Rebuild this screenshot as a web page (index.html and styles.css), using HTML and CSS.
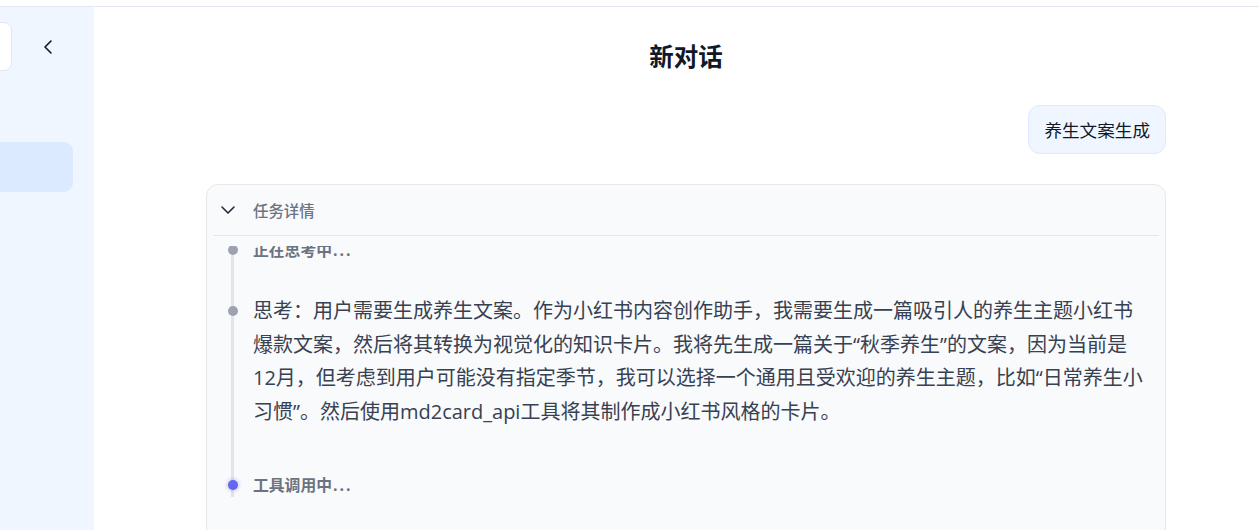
FILE: index.html
```html
<!DOCTYPE html>
<html lang="zh-CN">
<head>
<meta charset="utf-8">
<title>新对话</title>
<link rel="stylesheet" href="styles.css">
</head>
<body>
<div class="topbar"></div>
<div class="layout">
  <aside class="sidebar">
    <div class="side-top">
      <div class="side-box"></div>
      <button class="collapse" aria-label="收起">
        <svg width="16" height="16" viewBox="0 0 16 16"><polyline points="11,2 5,8 11,14" fill="none" stroke="#111827" stroke-width="1.6" stroke-linecap="round" stroke-linejoin="round"/></svg>
      </button>
    </div>
    <div class="side-item active"></div>
  </aside>
  <main class="main">
    <div class="column">
      <h1 class="title">新对话</h1>
      <div class="user-row">
        <div class="bubble">养生文案生成</div>
      </div>
      <section class="task-card">
        <div class="task-head">
          <svg width="16" height="16" viewBox="0 0 16 16"><polyline points="2,5 8,11 14,5" fill="none" stroke="#1f2937" stroke-width="1.6" stroke-linecap="round" stroke-linejoin="round"/></svg>
          <span class="task-label">任务详情</span>
        </div>
        <div class="task-body">
          <div class="timeline">
            <div class="step status">正在思考中<span class="dots">...</span></div>
            <div class="step thought">思考：用户需要生成养生文案。作为小红书内容创作助手，我需要生成一篇吸引人的养生主题小红书爆款文案，然后将其转换为视觉化的知识卡片。我将先生成一篇关于“秋季养生”的文案，因为当前是12月，但考虑到用户可能没有指定季节，我可以选择一个通用且受欢迎的养生主题，比如“日常养生小习惯”。然后使用md2card_api工具将其制作成小红书风格的卡片。</div>
            <div class="step status current">工具调用中<span class="dots">...</span></div>
          </div>
        </div>
      </section>
    </div>
  </main>
</div>
</body>
</html>
```
FILE: styles.css
```css
* { box-sizing: border-box; }
html, body {
  margin: 0;
  height: 530px;
  overflow: hidden;
  background: #ffffff;
  font-family: "Open Sans", "Noto Sans CJK SC", sans-serif;
  color: #111827;
}
.topbar {
  height: 7px;
  border-bottom: 1px solid #e2e8f0;
}
.layout {
  display: flex;
  height: 523px;
}
.sidebar {
  width: 94px;
  flex: none;
  background: #eff6ff;
  overflow: hidden;
}
.side-top {
  display: flex;
  align-items: center;
  padding-top: 15px;
  gap: 28px;
}
.side-box {
  width: 52px;
  height: 49px;
  margin-left: -40px;
  background: #ffffff;
  border: 1px solid #e2e8f0;
  border-radius: 8px;
  flex: none;
}
.collapse {
  border: 0;
  background: none;
  padding: 0;
  width: 16px;
  height: 16px;
  display: flex;
}
.side-item {
  margin-top: 71px;
  margin-left: -20px;
  width: 93px;
  height: 50px;
  border-radius: 9px;
}
.side-item.active { background: #dbeafe; }

.main {
  flex: 1;
  overflow: hidden;
  padding-left: 112px;
}
.column {
  width: 960px;
}
.title {
  margin: 0;
  padding-top: 32px;
  text-align: center;
  font-size: 24.5px;
  line-height: 36px;
  font-weight: 700;
  color: #111827;
}
.user-row {
  display: flex;
  justify-content: flex-end;
  margin-top: 30px;
}
.bubble {
  height: 49px;
  padding: 0 15px;
  display: flex;
  align-items: center;
  background: #eff6ff;
  border: 1px solid #dbeafe;
  border-radius: 12px;
  font-size: 17.6px;
  color: #111827;
}
.task-card {
  margin-top: 30px;
  height: 400px;
  background: #f9fafb;
  border: 1px solid #e5e7eb;
  border-radius: 12px;
}
.task-head {
  margin: 0 6px;
  height: 51px;
  border-bottom: 1px solid #e5e7eb;
  display: flex;
  align-items: center;
  padding-left: 7px;
  gap: 17px;
}
.task-head svg { flex: none; }
.task-label {
  font-size: 15.4px;
  color: #6b7280;
  font-weight: 500;
}
.task-body {
  margin-top: 10px;
  height: 300px;
  overflow: hidden;
}
.timeline {
  position: relative;
  margin-top: -8px;
  margin-left: 20px;
  padding-left: 26px;
  width: 928px;
}
.timeline::before {
  content: "";
  position: absolute;
  left: 3.5px;
  top: 0;
  bottom: 0;
  width: 3px;
  background: #e2e4e9;
}
.step {
  position: relative;
}
.step::before {
  content: "";
  position: absolute;
  left: -25.5px;
  top: 7px;
  width: 10px;
  height: 10px;
  border-radius: 50%;
  background: #9ca3af;
}
.status {
  font-size: 15.8px;
  line-height: 24px;
  font-weight: 700;
  color: #6b7280;
}
.dots {
  letter-spacing: 2px;
  margin-left: 1px;
}
.step.status:first-child { margin-bottom: 32px; }
.thought {
  width: 891px;
  font-size: 20px;
  line-height: 33.6px;
  color: #374151;
  margin-bottom: 45px;
}
.thought::before { top: 11.8px; }
.current::before {
  background: #6366f1;
  box-shadow: 0 0 4px rgba(99, 102, 241, 0.55);
}
```
